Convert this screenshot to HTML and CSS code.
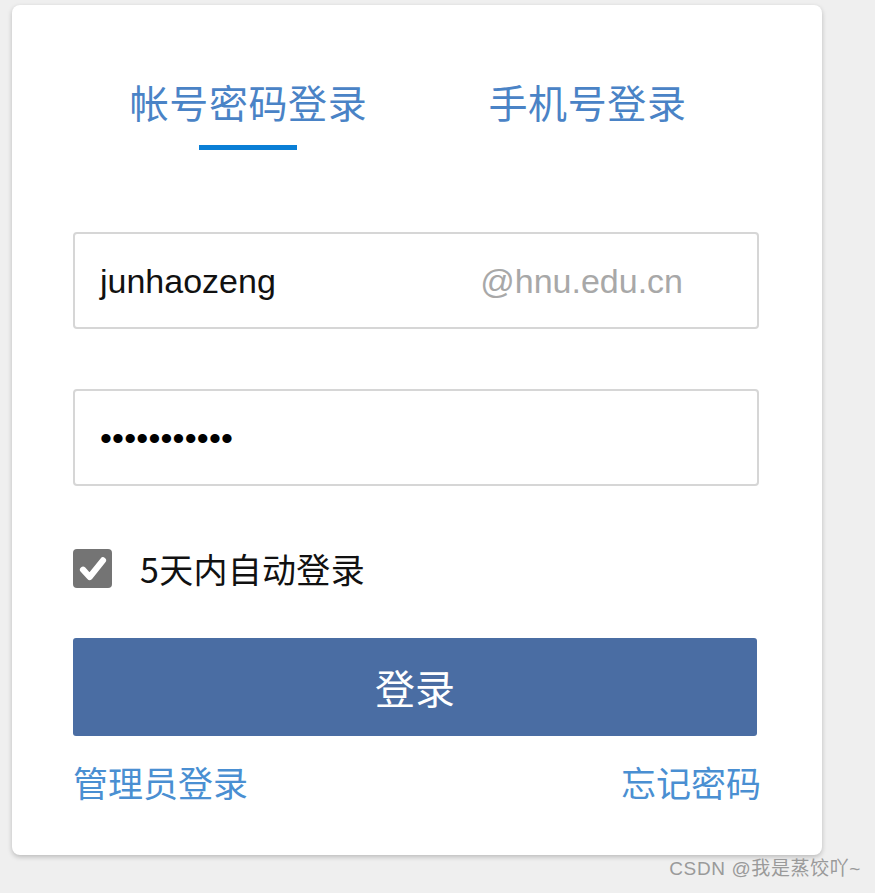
FILE: index.html
```html
<!DOCTYPE html>
<html lang="zh-CN">
<head>
<meta charset="utf-8">
<title>登录</title>
<link rel="stylesheet" href="styles.css">
</head>
<body>
<div class="card">
  <div class="tabs">
    <div class="tab active">
      <span class="tab-label">帐号密码登录</span>
      <span class="tab-bar"></span>
    </div>
    <div class="tab">
      <span class="tab-label">手机号登录</span>
    </div>
  </div>

  <div class="field field-user">
    <span class="field-value">junhaozeng</span>
    <span class="field-suffix">@hnu.edu.cn</span>
  </div>

  <div class="field field-pass">
    <span class="field-dots">•••••••••••</span>
  </div>

  <label class="remember">
    <span class="checkbox">
      <svg viewBox="0 0 24 24" width="32" height="32"><path d="M4.5 12.5 L9.5 18 L19.5 5.5" fill="none" stroke="#fff" stroke-width="4.6" stroke-linecap="round" stroke-linejoin="round"/></svg>
    </span>
    <span class="remember-text">5天内自动登录</span>
  </label>

  <button class="submit">登录</button>

  <div class="links">
    <a class="link">管理员登录</a>
    <a class="link">忘记密码</a>
  </div>
</div>
<div class="watermark">CSDN @我是蒸饺吖~</div>
</body>
</html>
```

FILE: styles.css
```css
* { box-sizing: border-box; }

html, body {
  margin: 0;
  padding: 0;
}

body {
  background: #efefef;
  padding: 5px 0 0 12px;
  font-family: "Liberation Sans", "Noto Sans CJK SC", sans-serif;
  width: 875px;
  height: 893px;
  overflow: hidden;
}

.card {
  width: 810px;
  height: 850px;
  background: #fff;
  border-radius: 8px;
  box-shadow: 0 2px 5px rgba(0, 0, 0, 0.22);
  padding: 75px 63px 0 61px;
}

.tabs {
  display: flex;
  height: 148px;
}

.tab {
  flex: 1 1 0;
  min-width: 0;
  display: flex;
  flex-direction: column;
  align-items: center;
}

.tab:first-child { padding-left: 6px; }
.tab:last-child { padding-right: 2px; }

.tab-label {
  font-family: "Noto Sans CJK SC", sans-serif;
  font-size: 39px;
  line-height: 42px;
  color: #4a83c6;
  letter-spacing: 0.6px;
}

.tab-bar {
  display: block;
  width: 98px;
  height: 5px;
  margin-top: 23px;
  margin-left: -2px;
  background: #0a7fd6;
}

.field {
  height: 97px;
  border: 2px solid #d6d6d6;
  border-radius: 4px;
  display: flex;
  align-items: center;
  padding: 0 74px 0 25px;
}

.field-user { margin-top: 4px; }
.field-pass { margin-top: 60px; }

.field-value {
  flex: 1;
  font-size: 34px;
  line-height: 40px;
  color: #111;
  letter-spacing: 0;
}

.field-suffix {
  font-size: 34px;
  line-height: 40px;
  color: #a8a8a8;
  letter-spacing: 0;
}

.field-dots {
  font-size: 34px;
  line-height: 40px;
  color: #000;
  letter-spacing: 0.2px;
}

.remember {
  display: flex;
  align-items: center;
  margin-top: 63px;
  height: 39px;
}

.checkbox {
  width: 39px;
  height: 39px;
  border-radius: 4px;
  background: #747474;
  display: flex;
  align-items: center;
  justify-content: center;
}

.remember-text {
  margin-left: 28px;
  font-family: "Noto Sans CJK SC", sans-serif;
  font-size: 34px;
  line-height: 40px;
  color: #111;
  letter-spacing: 0.3px;
}

.submit {
  display: block;
  width: 684px;
  height: 98px;
  margin-top: 50px;
  border: none;
  border-radius: 3px;
  background: #4a6da3;
  color: #fff;
  font-family: "Noto Sans CJK SC", sans-serif;
  font-size: 40px;
  line-height: 40px;
  padding: 0;
}

.links {
  display: flex;
  justify-content: space-between;
  margin-top: 26px;
  margin-right: -2px;
}

.link {
  font-family: "Noto Sans CJK SC", sans-serif;
  font-size: 35px;
  line-height: 40px;
  color: #4a8fd2;
  letter-spacing: 0;
}

.watermark {
  margin-top: 3px;
  width: 849px;
  text-align: right;
  font-family: "Liberation Sans", "Noto Sans CJK SC", sans-serif;
  font-size: 19px;
  line-height: 22px;
  letter-spacing: 0.6px;
  color: #9a9a9a;
}
```
